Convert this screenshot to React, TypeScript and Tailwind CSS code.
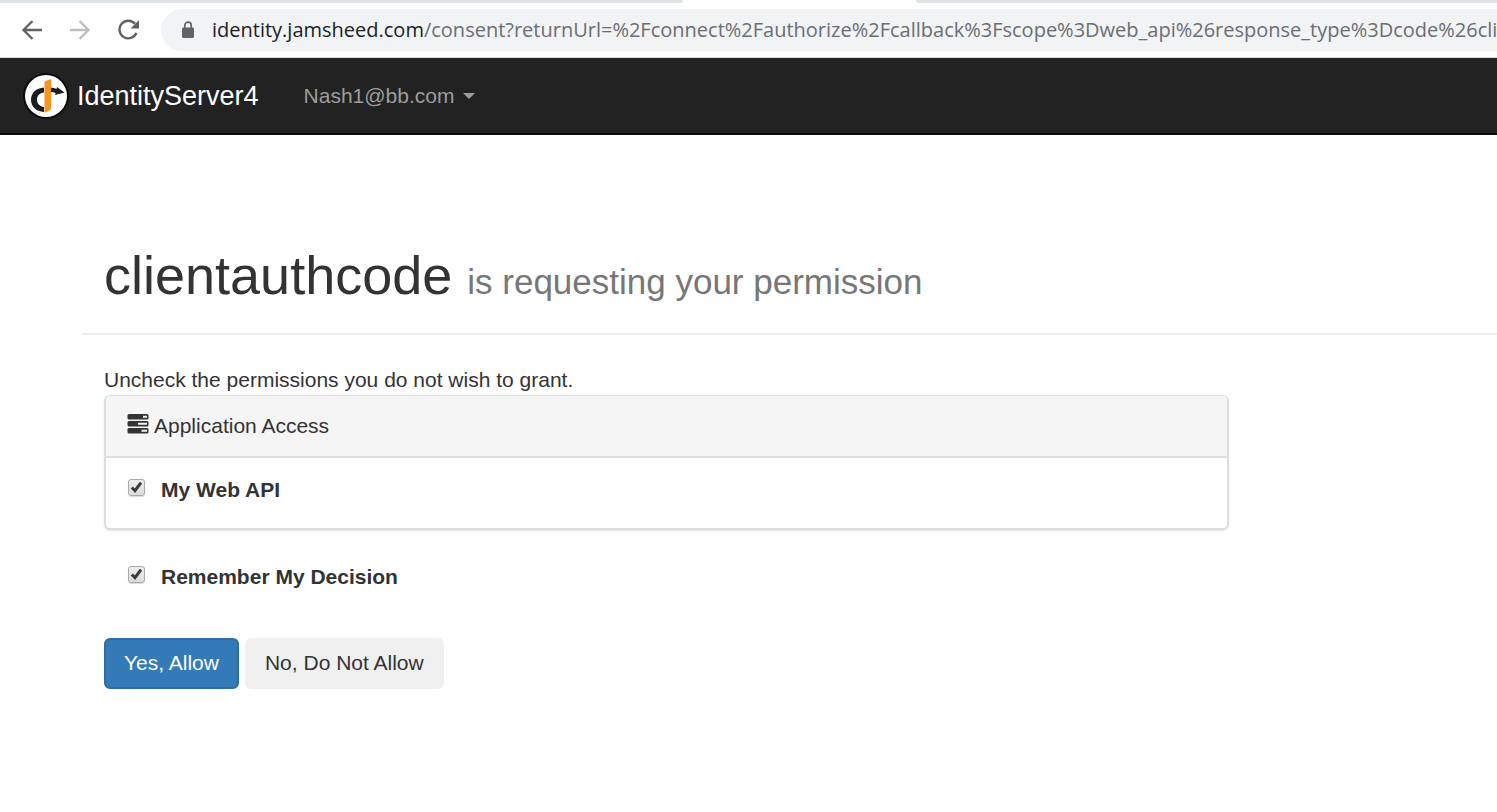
import React, { useState } from "react";

function BackIcon() {
  return (
    <svg width="22" height="22" viewBox="0 0 22 22" fill="none" stroke="currentColor" strokeWidth="2.3">
      <path d="M21 11H2.5M11.5 2L2.5 11l9 9" />
    </svg>
  );
}

function ForwardIcon() {
  return (
    <svg width="22" height="22" viewBox="0 0 22 22" fill="none" stroke="currentColor" strokeWidth="2.3">
      <path d="M1 11h18.5M10.5 2l9 9-9 9" />
    </svg>
  );
}

function ReloadIcon() {
  return (
    <svg width="22" height="22" viewBox="0 0 22 22" fill="none">
      <path d="M18.4 14A8.8 8.8 0 1 1 17 4.8" stroke="currentColor" strokeWidth="2.4" />
      <path d="M21 1v8.400h-8.400z" fill="currentColor" />
    </svg>
  );
}

function LockIcon() {
  return (
    <svg width="14" height="18" viewBox="0 0 14 18" fill="none">
      <rect x="1" y="6.5" width="12" height="10.5" rx="1.5" fill="currentColor" />
      <path d="M3.8 7V4.4a3.2 3.2 0 0 1 6.4 0V7" stroke="currentColor" strokeWidth="1.7" />
    </svg>
  );
}

function Logo() {
  return (
    <svg width="48" height="48" viewBox="0 0 48 48">
      <circle cx="24" cy="24" r="23" fill="#0c0c0c" />
      <circle cx="24" cy="24" r="21" fill="#fff" />
      <path d="M22 15.500C14 16 9 21 9 28c0 6.500 5 11.500 13 12v-5c-4-.6-7-3.300-7-7.300 0-4 2.500-6.700 7-7.200z" fill="#1c1c1c" />
      <path d="M29 15.800c2 0 4 .4 5.500 1.200l.5-2 7.500 5.500-9.500 2.500.7-2c-1.500-.6-3-.9-4.700-.9z" fill="#1c1c1c" />
      <path d="M22.500 9.500L29 7v30.500L22.500 41z" fill="#f7941e" />
    </svg>
  );
}

function ServerIcon() {
  return (
    <svg width="22" height="20" viewBox="0 0 22 20" fill="#333">
      <rect x="0.500" y="0" width="21" height="5.500" rx="1.500" />
      <rect x="0.500" y="7" width="21" height="5.500" rx="1.500" />
      <rect x="0.500" y="14" width="21" height="5.500" rx="1.500" />
      <path d="M16 1.700h4v2h-4zM11 8.700h9v2h-9zM14.500 15.700H20v2h-5.500z" fill="#f5f5f5" />
    </svg>
  );
}

function CheckField({ id, label }: { id: string; label: string }) {
  const [checked, setChecked] = useState(true);
  return (
    <div className="flex items-start">
      <span className="mt-1 grid size-[17px]">
        <input
          id={id}
          type="checkbox"
          checked={checked}
          onChange={(e) => setChecked(e.target.checked)}
          className="col-start-1 row-start-1 size-[17px] appearance-none rounded-[3px] border border-[#a9a9a9] bg-gradient-to-b from-[#ededed] to-[#dcdcdc] shadow-[0_1px_1px_rgba(0,0,0,0.15)]"
        />
        {checked && (
          <svg className="pointer-events-none col-start-1 row-start-1" width="17" height="17" viewBox="0 0 17 17" fill="none">
            <path d="M3.800 8.500l3.200 3.200 6-8" stroke="#3c3c3c" strokeWidth="3" />
          </svg>
        )}
      </span>
      <label htmlFor={id} className="ml-4 text-[21px] leading-[30px] font-bold">
        {label}
      </label>
    </div>
  );
}

export default function App() {
  return (
    <div className="min-h-screen overflow-x-hidden bg-white font-['Liberation_Sans',Arial,sans-serif] text-[21px] leading-[30px] text-[#333]">
      <div className="border-b border-[#dcdcdc]">
        <div className="flex h-[3px]">
          <div className="w-[683px] rounded-br-lg bg-[#dee1e6]" />
          <div className="w-[233px]" />
          <div className="flex-1 rounded-bl-lg bg-[#dee1e6]" />
        </div>
        <div className="flex h-[54px] items-center pl-[21px] text-[#5f6368]">
          <button type="button" aria-label="Back"><BackIcon /></button>
          <button type="button" aria-label="Forward" disabled className="ml-[26px] text-[#bcbec0]"><ForwardIcon /></button>
          <button type="button" aria-label="Reload" className="ml-[27px]"><ReloadIcon /></button>
          <div className="ml-[21px] flex h-[42px] min-w-0 flex-1 items-center overflow-hidden rounded-l-full bg-[#f1f3f4] pl-5">
            <span className="shrink-0"><LockIcon /></span>
            <div role="textbox" aria-label="Address" className="ml-[17px] font-['Open_Sans','Noto_Sans',sans-serif] text-[20px] whitespace-nowrap text-[#6b6e72]">
              <span className="text-[#202124]">identity.jamsheed.com</span>
              /consent?returnUrl=%2Fconnect%2Fauthorize%2Fcallback%3Fscope%3Dweb_api%26response_type%3Dcode%26clie
            </div>
          </div>
        </div>
      </div>

      <nav className="flex h-[77px] items-center border-b-2 border-[#080808] bg-[#222] pl-[22px]">
        <a href="#" className="flex items-center gap-[7px] text-[27px] text-white">
          <Logo />
          IdentityServer4
        </a>
        <button type="button" className="ml-[45px] flex items-center gap-[9px] text-[#9d9d9d]">
          Nash1@bb.com
          <svg width="12" height="6" viewBox="0 0 12 6" fill="currentColor"><path d="M0 0h12L6 6z" /></svg>
        </button>
      </nav>

      <main className="pt-[109px] pl-[82px]">
        <header className="border-b-2 border-[#eee] pb-[27px] pl-[22px]">
          <h1 className="text-[54px] leading-[62px]">
            clientauthcode <small className="text-[35px] leading-none text-[#777]">is requesting your permission</small>
          </h1>
        </header>
        <form className="mt-[30px] max-w-[1147px] pl-[22px]" onSubmit={(e) => e.preventDefault()}>
          <p>Uncheck the permissions you do not wish to grant.</p>
          <section className="overflow-hidden rounded-md border-2 border-t border-[#ddd] bg-white shadow-[0_1px_2px_rgba(0,0,0,0.1)]">
            <h2 className="flex h-[62px] items-start gap-[5px] border-b-2 border-[#ddd] bg-[#f5f5f5] px-[21px] pt-[15px]">
              <span className="pt-[3px]"><ServerIcon /></span>
              Application Access
            </h2>
            <div className="h-[70px] px-[22px] pt-[17px]">
              <CheckField id="web-api" label="My Web API" />
            </div>
          </section>
          <div className="mt-[32px] px-6">
            <CheckField id="remember" label="Remember My Decision" />
          </div>
          <div className="mt-[46px] flex gap-[6px]">
            <button type="submit" className="h-[51px] rounded-md border-2 border-[#2e6da4] bg-[#337ab7] px-[18px] pb-[2px] text-white">
              Yes, Allow
            </button>
            <button type="button" className="h-[51px] rounded-md bg-[#f0f0f0] px-5 pb-[2px]">
              No, Do Not Allow
            </button>
          </div>
        </form>
      </main>
    </div>
  );
}
